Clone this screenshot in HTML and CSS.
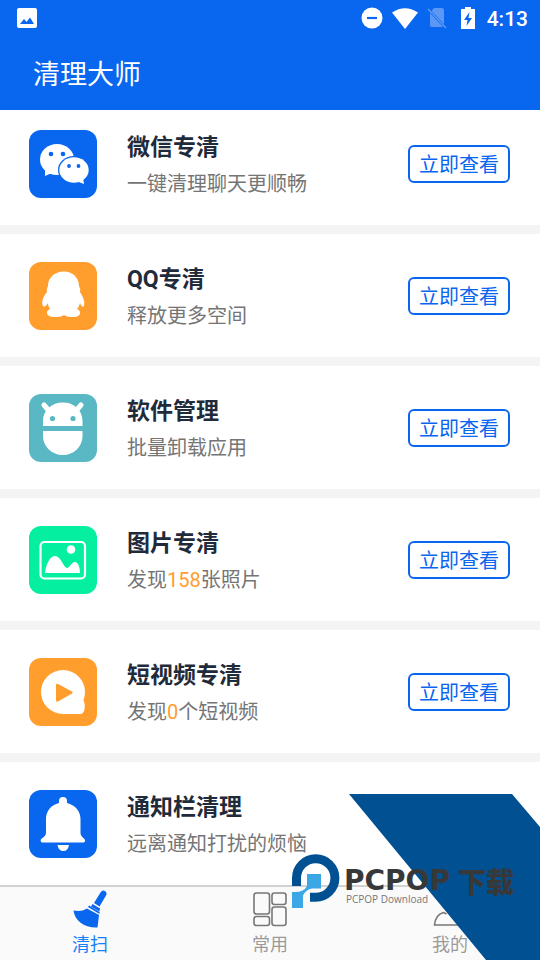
FILE: index.html
```html
<!DOCTYPE html>
<html lang="zh-CN">
<head>
<meta charset="utf-8">
<meta name="viewport" content="width=device-width, initial-scale=1">
<title>清理大师</title>
<link rel="stylesheet" href="styles.css">
</head>
<body>
<div class="app">
  <header class="top">
    <div class="status">
      <svg class="status-photo" width="20" height="20" viewBox="0 0 20 20"><rect width="20" height="20" rx="2" fill="#fff"/><path d="M3 16l4-5 2.500 3 3.500-4.500L17 16z" fill="#0966ef"/></svg>
      <div class="status-right">
        <svg width="22" height="22" viewBox="0 0 22 22"><circle cx="11" cy="11" r="10.500" fill="#fff"/><path d="M6 11h10" stroke="#0966ef" stroke-width="2.200"/></svg>
        <svg class="wifi" width="26" height="21" viewBox="0 0 26 21"><path d="M0 4.500Q13-4 26 4.500L13 21z" fill="#fff"/></svg>
        <svg class="sim" width="20" height="22" viewBox="0 0 20 22"><path d="M7 1h8q2 0 2 2v14L4.500 4zM3 6l13 14H5q-2 0-2-2z" fill="#5b98f5"/><path d="M1 2l18 19" stroke="#5b98f5" stroke-width="1.500"/></svg>
        <svg class="battery" width="14" height="22" viewBox="0 0 14 22"><path d="M4 0h6v2h4v20H0V2h4z" fill="#fff"/><path d="M8.500 5L3 13h3.500L5.500 19 11 11H7.500z" fill="#0966ef"/></svg>
        <span class="clock">4:13</span>
      </div>
    </div>
    <h1 class="app-title">清理大师</h1>
  </header>

  <main class="list">
    <section class="row">
      <svg class="tile" viewBox="0 0 68 68"><rect width="68" height="68" rx="12" fill="#0966ef"/><ellipse cx="28" cy="29.500" rx="17" ry="15.500" fill="#fff"/><path d="M16 38v8l9-4z" fill="#fff"/><circle cx="22" cy="24" r="2.300" fill="#0966ef"/><circle cx="34" cy="24" r="2.300" fill="#0966ef"/><ellipse cx="45" cy="40" rx="16" ry="14" fill="#0966ef"/><ellipse cx="45" cy="40" rx="14.700" ry="12.700" fill="#fff"/><path d="M47 51l8 3-1-6z" fill="#fff"/><circle cx="40" cy="36" r="1.900" fill="#0966ef"/><circle cx="49.500" cy="36" r="1.900" fill="#0966ef"/></svg>
      <div class="info"><h2>微信专清</h2><p>一键清理聊天更顺畅</p></div>
      <button class="view" type="button">立即查看</button>
    </section>
    <section class="row">
      <svg class="tile" viewBox="0 0 68 68"><rect width="68" height="68" rx="12" fill="#ff9d2d"/><path d="M35 9.500C44 9.500 50 16 50 24q2 3 1 6c4 6 5 11 4 14-1 2-3 0-4-3q-1 4-3 6c5 2 4 8-3 8-4 0-7 0-10-2-3 2-6 2-10 2-8 0-9-6-4-8-1-2-2-3-2-6-2 3-4 5-5 3-2-4 0-9 4-14q-1-3 1-6c0-8 6-14.500 16-14.500z" fill="#fff"/></svg>
      <div class="info"><h2>QQ专清</h2><p>释放更多空间</p></div>
      <button class="view" type="button">立即查看</button>
    </section>
    <section class="row">
      <svg class="tile" viewBox="0 0 68 68"><rect width="68" height="68" rx="12" fill="#5ab8c4"/><path d="M15 11l6 7M52 11l-6 7" stroke="#fff" stroke-width="5" stroke-linecap="round"/><path d="M14 32V27C14 16 23 8.500 34 8.500S53.500 16 53.500 27v5zM14 37h39.500v5c0 11-9 19-19.500 19S14 53 14 42z" fill="#fff"/><circle cx="23.500" cy="24.500" r="2.600" fill="#5ab8c4"/><circle cx="44" cy="24.500" r="2.600" fill="#5ab8c4"/></svg>
      <div class="info"><h2>软件管理</h2><p>批量卸载应用</p></div>
      <button class="view" type="button">立即查看</button>
    </section>
    <section class="row">
      <svg class="tile" viewBox="0 0 68 68"><rect width="68" height="68" rx="12" fill="#04f0a0"/><rect x="11.500" y="16" width="44.500" height="36.500" rx="4" fill="none" stroke="#fff" stroke-width="2.200"/><circle cx="42" cy="23.500" r="4.300" fill="#fff"/><path d="M16 47c1-9 5-17 10-17 6 0 8 11 12 12 3 0 4-6 8-6 3 0 5 5 5 11z" fill="#fff"/></svg>
      <div class="info"><h2>图片专清</h2><p>发现<b>158</b>张照片</p></div>
      <button class="view" type="button">立即查看</button>
    </section>
    <section class="row">
      <svg class="tile" viewBox="0 0 68 68"><rect width="68" height="68" rx="12" fill="#ff9d2d"/><circle cx="34" cy="34" r="22" fill="#fff"/><path d="M34 56V42h20.500q0 1 1 3c1 6-.5 10.500-4 11z" fill="#fff"/><path d="M27 27v15q0 2.500 2 1.500l14-8q1.500-1 0-2L29 26q-2-1-2 1z" fill="#ff9d2d"/></svg>
      <div class="info"><h2>短视频专清</h2><p>发现<b>0</b>个短视频</p></div>
      <button class="view" type="button">立即查看</button>
    </section>
    <section class="row">
      <svg class="tile" viewBox="0 0 68 68"><rect width="68" height="68" rx="12" fill="#0966ef"/><path d="M30 13v-2a4 4 0 0 1 8 0v2c8 2 13.500 8 13.500 16v14q0 3 4 6 1.500 3-1 3.500H13q-2-1-1-3.500 5-3 5-6V29c0-8 5-14 13-16zM28.500 55h11.500q-1 6-5.700 6t-5.800-6z" fill="#fff"/></svg>
      <div class="info"><h2>通知栏清理</h2><p>远离通知打扰的烦恼</p></div>
    </section>
  </main>

  <nav class="tabs">
    <a class="tab active" href="#clean">
      <svg width="36" height="40" viewBox="0 0 36 40"><path d="M28.500 3.500q2-3 4.500-1.500 2.500 2 1 4.500L27.500 17.500 22 14zM20.500 15l-1.500 2.500 8.500 5 .5-3zM17 16.500l-1 1.500 11.500 7v-2zM15 19.500l12 6.500-1.500 12.500C12 39 3 32 1.500 21.500 7 22.500 11 22 15 19.500z" fill="#0966ef"/></svg>
      <span>清扫</span>
    </a>
    <a class="tab" href="#common">
      <svg width="36" height="40" viewBox="0 0 36 40" fill="none" stroke="#777" stroke-width="1.600"><rect x="2" y="4" width="15.500" height="21" rx="2.500"/><rect x="20" y="4" width="14" height="11.500" rx="2.500"/><rect x="2" y="27.500" width="15.500" height="9" rx="2.500"/><rect x="20" y="18" width="14" height="18.500" rx="2.500"/></svg>
      <span>常用</span>
    </a>
    <a class="tab" href="#mine">
      <svg width="36" height="40" viewBox="0 0 36 40" fill="none" stroke="#777" stroke-width="1.600"><circle cx="19" cy="13" r="7"/><path d="M14.500 25l-3-1.500C6.500 25 3 29 2.500 36h31c-.5-7-4-11-8-12.500L22 25"/></svg>
      <span>我的</span>
    </a>
  </nav>

  <div class="mark">
    <svg class="band" viewBox="0 0 191 166"><path d="M0 0h163l28 33v133h-54z" fill="#005092"/></svg>
    <div class="brand">
      <svg class="brand-logo" width="48" height="54" viewBox="0 0 48 54"><path d="M4.500 32V24a19.200 19.200 0 1 1 19.200 19.200H18" fill="none" stroke="#005092" stroke-width="9"/><path d="M15 20h14v14.500H20q-6 1-9 7V54H0V38h3q9 0 12-6z" fill="#3ba8e5"/></svg>
      <div class="brand-text">
        <span class="brand-name">PCPOP<span class="brand-cn">下载</span></span>
        <span class="brand-sub">PCPOP Download</span>
      </div>
    </div>
  </div>
</div>
</body>
</html>
```
FILE: styles.css
```css
* {
  box-sizing: border-box;
  margin: 0;
  padding: 0;
}

body {
  font-family: Roboto, "Noto Sans CJK SC", sans-serif;
  background: #fff;
}

svg {
  display: block;
  flex: none;
}

.app {
  position: relative;
  display: flex;
  flex-direction: column;
  height: 100vh;
  overflow: hidden;
}

.top {
  flex: none;
  background: #0966ef;
  color: #fff;
}

.status {
  display: flex;
  align-items: center;
  justify-content: space-between;
  height: 36px;
  padding: 0 12px 0 17px;
}

.status-right {
  display: flex;
  align-items: center;
  gap: 9px;
}

.battery {
  margin: 0 3px 0 5px;
}

.clock {
  padding-top: 2px;
  font-size: 21px;
  font-weight: 500;
  line-height: 34px;
}

.app-title {
  padding: 4px 33px 0;
  font-size: 27px;
  font-weight: 400;
  line-height: 70px;
}

.list {
  flex: 1;
  min-height: 0;
  overflow: hidden;
}

.row {
  display: flex;
  align-items: center;
  height: 132px;
  padding: 0 30px 0 29px;
  border-bottom: 9px solid #f4f4f4;
}

.row:first-child {
  height: 124px;
  padding-bottom: 8px;
}

.tile {
  width: 68px;
  height: 68px;
  margin-right: 30px;
}

.info {
  flex: 1;
  padding-top: 4px;
}

.info h2 {
  font-size: 23px;
  font-weight: 700;
  line-height: 36px;
  color: #1f2b3a;
}

.info p {
  font-size: 20px;
  line-height: 36px;
  color: #757575;
}

.info b {
  font-weight: 400;
  color: #ff9d2d;
}

.view {
  width: 102px;
  height: 38px;
  padding-top: 2px;
  border: 2px solid #0966ef;
  border-radius: 6px;
  background: #fff;
  color: #0966ef;
  font-family: inherit;
  font-size: 20px;
  line-height: 32px;
}

.tabs {
  flex: none;
  display: flex;
  height: 75px;
  border-top: 2px solid #d2d2d2;
  background: #fafafa;
}

.tab {
  flex: 1;
  display: flex;
  flex-direction: column;
  align-items: center;
  padding-top: 2px;
  font-size: 18px;
  line-height: 32px;
  color: #9a9a9a;
  text-decoration: none;
}

.tab.active {
  color: #1680f5;
}

.mark {
  position: absolute;
  right: 0;
  bottom: 0;
  pointer-events: none;
}

.band {
  width: 191px;
  height: 166px;
}

.brand {
  position: absolute;
  right: 22px;
  bottom: 52px;
  display: flex;
  gap: 4px;
  width: 226px;
}

.brand-text {
  display: flex;
  flex-direction: column;
  padding-top: 14px;
  white-space: nowrap;
}

.brand-name {
  display: flex;
  font-family: "DejaVu Sans", sans-serif;
  font-size: 28px;
  font-weight: 700;
  line-height: 26px;
  color: #383838;
}

.brand-cn {
  margin-left: 8px;
  font-family: "Noto Sans CJK SC", sans-serif;
  font-weight: 900;
}

.brand-sub {
  padding-left: 2px;
  font-family: "Open Sans", sans-serif;
  font-size: 10px;
  line-height: 10px;
  color: #777;
}
```
